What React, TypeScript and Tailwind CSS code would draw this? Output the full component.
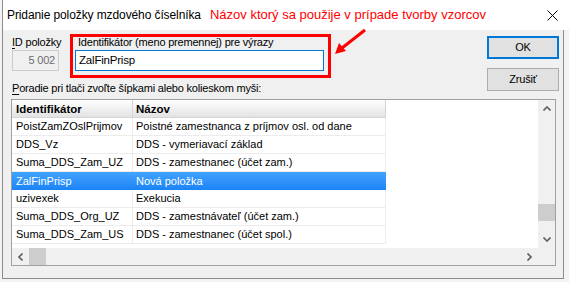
import React from "react";

const ROWS = [
  { id: "PoistZamZOslPrijmov", name: "Poistné zamestnanca z príjmov osl. od dane" },
  { id: "DDS_Vz", name: "DDS - vymeriavací základ" },
  { id: "Suma_DDS_Zam_UZ", name: "DDS - zamestnanec (účet zam.)" },
  { id: "ZalFinPrisp", name: "Nová položka", selected: true },
  { id: "uzivexek", name: "Exekucia" },
  { id: "Suma_DDS_Org_UZ", name: "DDS - zamestnávateľ (účet zam.)" },
  { id: "Suma_DDS_Zam_US", name: "DDS - zamestnanec (účet spol.)" },
];

const font = { fontFamily: '"Liberation Sans", Arial, sans-serif' };

export default function App() {
  return (
    <div className="relative w-[569px] h-[282px] overflow-hidden bg-[#f3f3f3] text-black" style={font}>
      {/* title bar */}
      <div className="ml-[2px] h-[30px] bg-white flex items-center border-l border-[#8c8c8c]">
        <span className="ml-[4px] text-[12px] tracking-[-0.1px] whitespace-nowrap">Pridanie položky mzdového číselníka</span>
        <span className="ml-[9px] text-[13px] text-[#ff0000] whitespace-nowrap">Názov ktorý sa použije v prípade tvorby vzorcov</span>
        <svg className="ml-auto mr-[11px]" width="11" height="11" viewBox="0 0 11 11">
          <path d="M0.5 0.5 L10.5 10.5 M10.5 0.5 L0.5 10.5" stroke="#000" strokeWidth="1" />
        </svg>
      </div>

      {/* dialog body */}
      <div className="ml-[2px] w-[562px] h-[249px] bg-[#f0f0f0] border-l border-r border-b border-[#8c8c8c] text-[11px] tracking-[-0.2px]">
        <div className="flex pt-[5px] pl-[9px] h-[66px]">
          <div className="flex flex-col">
            <div className="flex">
              <div className="w-[47px]">
                <div className="h-[15px] leading-[15px] whitespace-nowrap">
                  <span className="underline underline-offset-2">I</span>D položky
                </div>
                <div className="h-[21px] border border-[#cccccc] bg-[#f0f0f0] text-[#6d6d6d] text-right pr-[3px] leading-[19px]">
                  5 002
                </div>
              </div>
              <div className="ml-[16px] w-[249px]">
                <div className="h-[15px] leading-[15px] pl-[3px] whitespace-nowrap">Identifikátor (meno premennej) pre výrazy</div>
                <div className="h-[21px] border border-[#0078d7] bg-white pl-[3px] leading-[19px] text-[11.5px]">ZalFinPrisp</div>
              </div>
            </div>
            <div className="mt-[10px] h-[15px] leading-[15px] whitespace-nowrap">
              <span className="underline underline-offset-2">P</span>oradie pri tlači zvoľte šípkami alebo kolieskom myši:
            </div>
          </div>
          <div className="ml-auto mr-[4px] flex flex-col gap-[9px] w-[72px]">
            <div className="h-[23px] mt-[1px] border-2 border-[#0078d7] bg-[#e1e1e1] flex items-center justify-center">OK</div>
            <div className="h-[23px] border border-[#adadad] bg-[#e1e1e1] flex items-center justify-center">Zrušiť</div>
          </div>
        </div>

        {/* list */}
        <div className="ml-[8px] mt-[3px] w-[545px] h-[167px] border border-[#a0a0a0] bg-white flex flex-col tracking-normal">
          <div className="flex flex-1 min-h-0">
            <div className="flex-1 flex flex-col">
              <div className="flex h-[18px] w-[374px] bg-gradient-to-b from-white to-[#e3e3e3] border-b border-[#d5d5d5] font-bold text-[11.5px]">
                <div className="w-[121px] pl-[4px] leading-[18px] border-r border-[#d5d5d5]">Identifikátor</div>
                <div className="flex-1 pl-[3px] leading-[18px] border-r border-[#d5d5d5]">Názov</div>
              </div>
              {ROWS.map((r) => (
                <div
                  key={r.id}
                  className={
                    r.selected
                      ? "flex h-[18px] w-[374px] bg-gradient-to-b from-[#42a3ff] to-[#1a83f5] text-white text-[11px]"
                      : "flex h-[18px] w-[374px] border-b border-[#ececec] text-[11px]"
                  }
                >
                  <div className={r.selected ? "w-[121px] pl-[4px] leading-[18px] whitespace-nowrap" : "w-[121px] pl-[4px] leading-[17px] border-r border-[#ececec] whitespace-nowrap"}>
                    {r.id}
                  </div>
                  <div className={r.selected ? "flex-1 pl-[3px] leading-[18px] whitespace-nowrap" : "flex-1 pl-[3px] leading-[17px] border-r border-[#ececec] whitespace-nowrap"}>
                    {r.name}
                  </div>
                </div>
              ))}
            </div>
            {/* vertical scrollbar */}
            <div className="w-[17px] bg-[#f0f0f0] flex flex-col items-center">
              <div className="h-[17px] flex items-center justify-center">
                <svg width="8" height="5" viewBox="0 0 8 5"><path d="M0.5 4.5 L4 1 L7.5 4.5" stroke="#606060" strokeWidth="1.6" fill="none" /></svg>
              </div>
              <div className="flex-1 w-full flex flex-col">
                <div className="h-[87px]" />
                <div className="h-[17px] w-full bg-[#cdcdcd]" />
              </div>
              <div className="h-[17px] flex items-center justify-center">
                <svg width="8" height="5" viewBox="0 0 8 5"><path d="M0.5 0.5 L4 4 L7.5 0.5" stroke="#606060" strokeWidth="1.6" fill="none" /></svg>
              </div>
            </div>
          </div>
          {/* horizontal scrollbar */}
          <div className="h-[17px] flex bg-[#f0f0f0]">
            <div className="flex-1 flex items-center">
              <div className="w-[17px] flex items-center justify-center">
                <svg width="5" height="8" viewBox="0 0 5 8"><path d="M4.5 0.5 L1 4 L4.5 7.5" stroke="#606060" strokeWidth="1.6" fill="none" /></svg>
              </div>
              <div className="w-[17px] h-[17px] bg-[#cdcdcd]" />
              <div className="flex-1" />
              <div className="w-[17px] flex items-center justify-center">
                <svg width="5" height="8" viewBox="0 0 5 8"><path d="M0.5 0.5 L4 4 L0.5 7.5" stroke="#606060" strokeWidth="1.6" fill="none" /></svg>
              </div>
            </div>
            <div className="w-[17px] bg-[#f0f0f0]" />
          </div>
        </div>
      </div>

      {/* annotation overlay */}
      <div className="absolute left-[70px] top-[34px] w-[261px] h-[44px] border-[3px] border-[#ff0000] pointer-events-none" />
      <svg className="absolute left-[332px] top-[27px]" width="36" height="30" viewBox="0 0 36 30">
        <path d="M33 3 L10 21" stroke="#ff0000" strokeWidth="3" />
        <path d="M3 27 L7 16 L14 24 Z" fill="#ff0000" />
      </svg>
    </div>
  );
}
